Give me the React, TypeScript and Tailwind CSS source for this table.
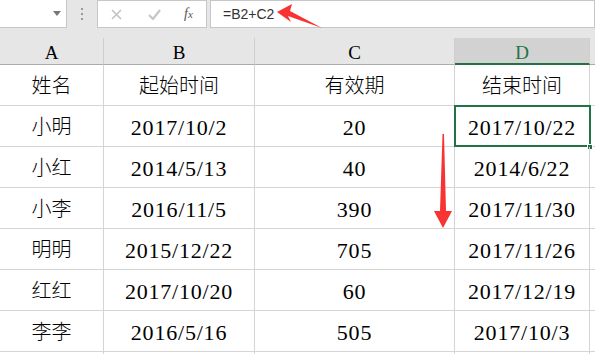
import React from "react";

const rows: [string, string, string, string][] = [
  ["小明", "2017/10/2", "20", "2017/10/22"],
  ["小红", "2014/5/13", "40", "2014/6/22"],
  ["小李", "2016/11/5", "390", "2017/11/30"],
  ["明明", "2015/12/22", "705", "2017/11/26"],
  ["红红", "2017/10/20", "60", "2017/12/19"],
  ["李李", "2016/5/16", "505", "2017/10/3"],
];

const cjk = "font-['Noto_Sans_CJK_SC',sans-serif] font-light text-[20px] leading-none";
const num = "font-['Liberation_Serif',serif] text-[22px] tracking-[0.8px] leading-none pt-[4px]";
const cell = "border-r border-b border-[#d4d4d4] flex items-center justify-center text-black";

export default function App() {
  return (
    <div className="w-[595px] h-[354px] overflow-hidden bg-white relative">
      {/* toolbar */}
      <div className="h-[28px] bg-[#e6e6e6] flex">
        <div className="w-[67px] h-[28px] bg-white border-r border-b border-[#c6c6c6] flex items-center justify-end pr-[5px]">
          <svg width="8" height="5" viewBox="0 0 8 5"><path d="M0 0h8L4 5z" fill="#777" /></svg>
        </div>
        <div className="w-[30px] flex flex-col items-center justify-center gap-[3px]">
          <div className="w-[2px] h-[2px] bg-[#9a9a9a]" />
          <div className="w-[2px] h-[2px] bg-[#9a9a9a]" />
          <div className="w-[2px] h-[2px] bg-[#9a9a9a]" />
        </div>
        <div className="w-[110px] h-[28px] bg-white border border-[#c6c6c6] flex items-center">
          <svg className="ml-[13px]" width="11" height="11" viewBox="0 0 11 11">
            <path d="M1 1L10 10M10 1L1 10" stroke="#c0c0c0" strokeWidth="1.5" />
          </svg>
          <svg className="ml-[26px]" width="13" height="11" viewBox="0 0 13 11">
            <path d="M1 6L5 10L12 1" stroke="#c6c6c6" strokeWidth="2.2" fill="none" />
          </svg>
          <span className="ml-[23px] font-['Liberation_Serif',serif] italic text-[14px] text-[#555] leading-none">
            f<span className="text-[11px]">x</span>
          </span>
        </div>
        <div className="w-[3px]" />
        <div className="flex-1 h-[28px] bg-white border border-[#c6c6c6] flex items-center pl-[12px]">
          <span className="font-['Liberation_Sans',sans-serif] text-[14px] text-[#333] leading-none">=B2+C2</span>
        </div>
      </div>

      {/* column header */}
      <div className="h-[37px] bg-[#e6e6e6] grid grid-cols-[104px_151px_200px_135px_1fr] items-end">
        {["A", "B", "C"].map((c) => (
          <div key={c} className="h-[27px] border-r border-b border-r-[#cfcfcf] border-b-[#ababab] flex items-center justify-center font-['Liberation_Serif',serif] text-[19px] text-black leading-none pt-[2px]">
            {c}
          </div>
        ))}
        <div className="h-[27px] bg-[#d2d2d2] border-r border-r-[#cfcfcf] border-b-2 border-b-[#217346] flex items-center justify-center font-['Liberation_Serif',serif] text-[19px] text-[#217346] leading-none pt-[3px]">
          D
        </div>
        <div className="h-[27px] border-b border-b-[#ababab]" />
      </div>

      {/* data grid */}
      <div className="grid grid-cols-[104px_151px_200px_135px_1fr] auto-rows-[41px]">
        <div className={cell}><span className={cjk}>姓名</span></div>
        <div className={cell}><span className={cjk}>起始时间</span></div>
        <div className={cell}><span className={cjk}>有效期</span></div>
        <div className={cell}><span className={cjk}>结束时间</span></div>
        <div className="border-b border-[#d4d4d4]" />
        {rows.map((r, i) => (
          <React.Fragment key={i}>
            <div className={cell}><span className={cjk}>{r[0]}</span></div>
            <div className={cell}><span className={num}>{r[1]}</span></div>
            <div className={cell}><span className={num}>{r[2]}</span></div>
            <div className={cell + " relative"}>
              <span className={num}>{r[3]}</span>
              {i === 0 && (
                <>
                  <div className="absolute -top-[1px] -left-[1px] w-[137px] h-[42px] border-2 border-[#217346]" />
                  <div className="absolute -bottom-[4px] -right-[4px] w-[6px] h-[6px] bg-[#217346] border border-white" />
                </>
              )}
            </div>
            <div className="border-b border-[#d4d4d4]" />
          </React.Fragment>
        ))}
        <div className={cell} />
        <div className={cell} />
        <div className={cell} />
        <div className={cell} />
        <div className="border-b border-[#d4d4d4]" />
      </div>

      {/* red arrows */}
      <svg className="absolute left-0 top-0 pointer-events-none" width="595" height="354" viewBox="0 0 595 354">
        <path d="M277 12 L292 4 L290 11 L322 28 L288 16 L291 22 Z" fill="#f73333" />
        <path d="M442.5 134 L444 134 L446 211 L452 211 L443 228 L434 211 L440 211 Z" fill="#f73333" />
      </svg>
    </div>
  );
}
